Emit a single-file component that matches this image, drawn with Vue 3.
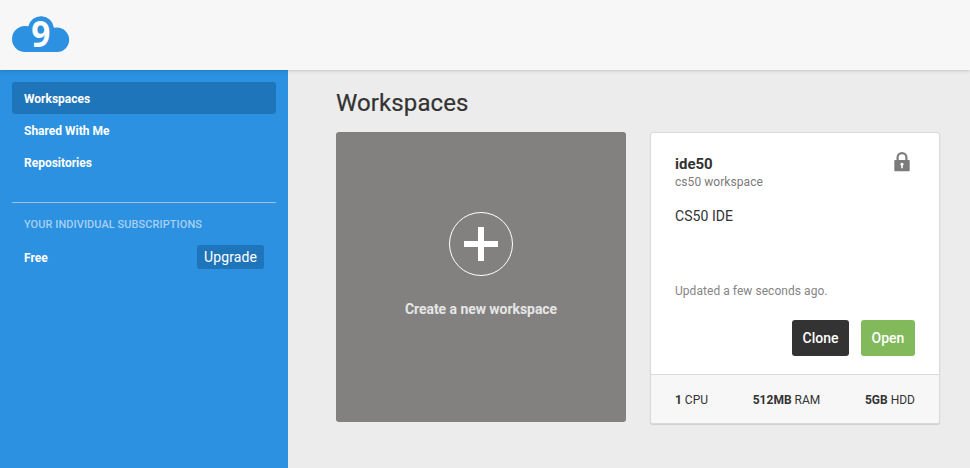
<script setup>
const navItems = [
  { label: 'Workspaces', active: true },
  { label: 'Shared With Me', active: false },
  { label: 'Repositories', active: false },
]
const specs = [
  { value: '1', unit: 'CPU' },
  { value: '512MB', unit: 'RAM' },
  { value: '5GB', unit: 'HDD' },
]
</script>

<template>
  <div class="page">
    <header class="topbar">
      <svg class="logo" width="58" height="36" viewBox="0 0 58 36">
        <path d="M13 36A13 13 0 0 1 13 10Q15 10 16.300 10.300A13 13 0 0 1 41.900 11.800Q43.400 11.600 45 11.600A12.200 12.200 0 0 1 45 36z" fill="#2c91e0" />
        <text class="logo-nine" transform="translate(28.800 30.500) scale(0.930 1)" text-anchor="middle">9</text>
      </svg>
    </header>
    <div class="body">
      <aside class="sidebar">
        <nav class="nav">
          <a v-for="item in navItems" :key="item.label" class="nav-item" :class="{ active: item.active }">{{ item.label }}</a>
        </nav>
        <section class="subscriptions">
          <h2 class="sub-title">YOUR INDIVIDUAL SUBSCRIPTIONS</h2>
          <div class="plan">
            <span class="plan-name">Free</span>
            <button class="upgrade">Upgrade</button>
          </div>
        </section>
      </aside>
      <main class="content">
        <h1 class="title">Workspaces</h1>
        <div class="cards">
          <div class="create">
            <div class="circle">
              <svg width="36" height="36" viewBox="0 0 36 36"><path d="M15 1h6v14h14v6H21v14h-6V21H1v-6h14z" fill="#fff" /></svg>
            </div>
            <span class="create-label">Create a new workspace</span>
          </div>
          <article class="card">
            <div class="card-body">
              <div class="card-head">
                <div>
                  <h3 class="name">ide50</h3>
                  <p class="kind">cs50 workspace</p>
                </div>
                <svg class="lock" width="16" height="20" viewBox="0 0 16 20">
                  <path d="M3.600 9V5.500a4.400 4.400 0 0 1 8.800 0V9" fill="none" stroke="#7c7c7c" stroke-width="2.200" />
                  <rect x="0.300" y="8" width="15.400" height="11.300" rx="0.800" fill="#7c7c7c" />
                  <path d="M6.400 12.300a1.600 1.600 0 1 1 2.400 1.400V16.300h-1.600v-2.600a1.600 1.600 0 0 1-.8-1.400z" fill="#fff" />
                </svg>
              </div>
              <p class="description">CS50 IDE</p>
              <p class="updated">Updated a few seconds ago.</p>
              <div class="actions">
                <button class="btn clone">Clone</button>
                <button class="btn open">Open</button>
              </div>
            </div>
            <footer class="specs">
              <span v-for="spec in specs" :key="spec.unit"><b>{{ spec.value }}</b> {{ spec.unit }}</span>
            </footer>
          </article>
        </div>
      </main>
    </div>
  </div>
</template>

<style>
body { margin: 0; background: #ececec; }
</style>

<style scoped>
.page { height: 468px; display: flex; flex-direction: column; overflow: hidden; font-family: Roboto, sans-serif; color: #333; }
h1, h2, h3, p { margin: 0; }
button { border: 0; padding: 0; font-family: inherit; color: #fff; }
.topbar { height: 70px; flex: none; box-sizing: border-box; padding: 16px 12px 0; background: #f7f7f7; box-shadow: 0 0 4px rgba(0, 0, 0, 0.25); position: relative; z-index: 1; }
.logo { display: block; overflow: visible; }
.logo-nine { font: 700 36px/1 "Open Sans", sans-serif; fill: #fff; }
.body { flex: 1; display: flex; min-height: 0; }
.sidebar { width: 288px; box-sizing: border-box; padding: 12px; background: #2c91e0; color: #fff; flex: none; }
.nav { display: flex; flex-direction: column; }
.nav-item { height: 32px; line-height: 34px; padding: 0 12px; border-radius: 3px; font-size: 12px; font-weight: 700; }
.active { background: #1f75ba; }
.subscriptions { margin-top: 24px; padding: 0 12px; border-top: 1px solid #a2bfde; }
.sub-title { margin-top: 14px; font-size: 11px; line-height: 16px; font-weight: 500; letter-spacing: 0.06px; color: #a7d0f2; }
.plan { margin-top: 12px; height: 24px; display: flex; align-items: center; justify-content: space-between; }
.plan-name { padding-top: 2px; font-size: 12px; font-weight: 700; }
.upgrade { width: 67px; height: 24px; border-radius: 3px; background: #1f75ba; font-size: 14px; line-height: 24px; letter-spacing: 0.1px; }
.content { flex: 1; padding: 18px 30px 0 48px; }
.title { font-size: 24px; line-height: 30px; font-weight: 400; letter-spacing: 0.1px; -webkit-text-stroke: 0.2px #333; }
.cards { display: flex; gap: 24px; margin-top: 14px; }
.create { width: 290px; height: 290px; box-sizing: border-box; padding-top: 80px; border-radius: 3px; background: #82817f; display: flex; flex-direction: column; align-items: center; }
.circle { width: 64px; height: 64px; box-sizing: border-box; border: 1px solid #fff; border-radius: 50%; display: flex; align-items: center; justify-content: center; }
.create-label { margin-top: 23px; font-size: 14px; line-height: 20px; font-weight: 700; letter-spacing: -0.05px; color: #e6e6e6; }
.card { width: 290px; height: 292px; box-sizing: border-box; border: 1px solid #d9d9d9; border-radius: 3px; background: #fff; box-shadow: 0 1px 1px rgba(0, 0, 0, 0.12); overflow: hidden; }
.card-body { height: 241px; box-sizing: border-box; padding: 19px 24px 0; }
.card-head { display: flex; justify-content: space-between; }
.name { margin-top: 2px; font-size: 15px; line-height: 20px; font-weight: 700; }
.kind { font-size: 12px; line-height: 16px; letter-spacing: 0.06px; color: #7b7b7b; }
.lock { margin-right: 5px; }
.description { margin-top: 16px; font-size: 14px; line-height: 20px; letter-spacing: 0.06px; }
.updated { margin-top: 57px; font-size: 12px; line-height: 16px; letter-spacing: 0.05px; color: #858585; }
.actions { margin-top: 21px; display: flex; justify-content: flex-end; gap: 12px; }
.btn { height: 36px; border-radius: 3px; font-size: 14px; font-weight: 500; }
.clone { width: 57px; background: #333; }
.open { width: 54px; background: #81b95b; }
.specs { height: 49px; box-sizing: border-box; padding: 2px 24px 0; border-top: 1px solid #d9d9d9; background: #f7f7f7; display: flex; align-items: center; justify-content: space-between; font-size: 12px; }
</style>
